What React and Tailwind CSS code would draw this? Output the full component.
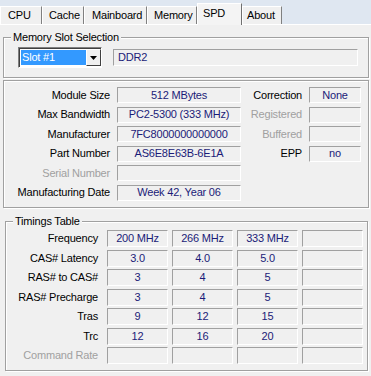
import React from 'react';

const Tab = ({ label, width, pl, selected }) => (
  <div
    className={
      selected
        ? 'flex h-[22px] items-start pt-[4px] bg-[#f4f4f4] border-l border-t border-white border-r border-r-[#707070] -mb-[1px] relative z-10 shrink-0'
        : 'flex h-[18px] items-center bg-[#f0f0f0] border-l border-t border-white border-r border-r-[#808080] shrink-0'
    }
    style={{ width, paddingLeft: pl }}
  >
    {label}
  </div>
);

const Field = ({ children, className = '' }) => (
  <div
    className={`flex items-center justify-center h-[16px] border-t border-l border-[#a0a0a0] border-b border-r border-b-white border-r-white text-[#1b1b78] whitespace-nowrap ${className}`}
  >
    {children}
  </div>
);

const Group = ({ title, className = '', children }) => (
  <div
    className={`relative border border-[#a0a0a0] shadow-[inset_1px_1px_0_#ffffff,1px_1px_0_#ffffff] ${className}`}
  >
    {title && (
      <div className="absolute left-[7px] top-[-8px] bg-[#f0f0f0] px-[2px] leading-[14px]">
        {title}
      </div>
    )}
    {children}
  </div>
);

const Label = ({ children, dim, className = '' }) => (
  <div
    className={`text-right whitespace-nowrap ${dim ? 'text-[#a0a0a0]' : 'text-black'} ${className}`}
  >
    {children}
  </div>
);

const moduleRows = [
  { label: 'Module Size', value: '512 MBytes' },
  { label: 'Max Bandwidth', value: 'PC2-5300 (333 MHz)' },
  { label: 'Manufacturer', value: '7FC8000000000000' },
  { label: 'Part Number', value: 'AS6E8E63B-6E1A' },
  { label: 'Serial Number', value: '', dim: true },
  { label: 'Manufacturing Date', value: 'Week 42, Year 06' },
];

const sideRows = [
  { label: 'Correction', value: 'None' },
  { label: 'Registered', value: '', dim: true },
  { label: 'Buffered', value: '', dim: true },
  { label: 'EPP', value: 'no' },
];

const timings = [
  { label: 'Frequency', values: ['200 MHz', '266 MHz', '333 MHz', ''] },
  { label: 'CAS# Latency', values: ['3.0', '4.0', '5.0', ''] },
  { label: 'RAS# to CAS#', values: ['3', '4', '5', ''] },
  { label: 'RAS# Precharge', values: ['3', '4', '5', ''] },
  { label: 'Tras', values: ['9', '12', '15', ''] },
  { label: 'Trc', values: ['12', '16', '20', ''] },
  { label: 'Command Rate', values: ['', '', '', ''], dim: true },
];

export default function App() {
  return (
    <div
      className="w-[371px] h-[376px] overflow-hidden bg-[#f0f0f0] text-[11px] leading-none tracking-[-0.2px] text-black"
      style={{ fontFamily: '"Liberation Sans", Arial, sans-serif' }}
    >
      {/* tab strip */}
      <div className="h-[24px] bg-[#dfe7f1] flex items-end">
        <Tab label="CPU" width={42} pl={7} />
        <Tab label="Cache" width={42} pl={6} />
        <Tab label="Mainboard" width={63} pl={7} />
        <Tab label="Memory" width={50} pl={6} />
        <Tab label="SPD" width={45} pl={5} selected />
        <Tab label="About" width={40} pl={4} />
      </div>

      {/* panel */}
      <div className="h-[352px] border-t border-white flex flex-col">
        <Group title="Memory Slot Selection" className="mt-[12px] ml-[3px] w-[366px] h-[41px]">
          <div className="flex items-center h-full pl-[14px]">
            <div className="flex w-[84px] h-[21px] bg-white border-t border-l border-[#808080] border-b border-r border-b-white border-r-white shadow-[inset_1px_1px_0_#404040]">
              <div className="flex items-center w-[66px] ml-[2px] mt-[2px] h-[15px] bg-[#3399ff] text-white pl-[1px]">
                Slot #1
              </div>
              <div className="flex items-center justify-center w-[15px] h-[17px] mt-[1px] bg-[#f0f0f0] border-t border-l border-white border-b border-r border-b-[#404040] border-r-[#404040]">
                <svg width="7" height="4" viewBox="0 0 7 4">
                  <path d="M0 0h7L3.5 4z" fill="#000" />
                </svg>
              </div>
            </div>
            <Field className="ml-[11px] w-[245px] h-[17px] !justify-start pl-[4px]">DDR2</Field>
          </div>
        </Group>

        <Group className="mt-[2px] ml-[3px] w-[366px] h-[128px]">
          <div className="flex pt-[6px]">
            <div className="flex flex-col gap-[3.6px]">
              {moduleRows.map((r) => (
                <div key={r.label} className="flex items-center">
                  <Label dim={r.dim} className="w-[106px]">
                    {r.label}
                  </Label>
                  <Field className="ml-[7px] w-[124px]">{r.value}</Field>
                </div>
              ))}
            </div>
            <div className="flex flex-col gap-[3.6px]">
              {sideRows.map((r) => (
                <div key={r.label} className="flex items-center">
                  <Label dim={r.dim} className="w-[61px]">
                    {r.label}
                  </Label>
                  <Field className="ml-[7px] w-[52px]">{r.value}</Field>
                </div>
              ))}
            </div>
          </div>
        </Group>

        <Group title="Timings Table" className="mt-[13px] ml-[5px] w-[363px] h-[150px]">
          <div className="flex flex-col gap-[2.5px] pt-[8px]">
            {timings.map((r) => (
              <div key={r.label} className="flex items-center">
                <Label dim={r.dim} className="w-[92px]">
                  {r.label}
                </Label>
                <div className="flex gap-[4px] ml-[9px]">
                  {r.values.map((v, i) => (
                    <Field key={i} className="w-[61px] h-[17px]">
                      {v}
                    </Field>
                  ))}
                </div>
              </div>
            ))}
          </div>
        </Group>
      </div>
    </div>
  );
}
